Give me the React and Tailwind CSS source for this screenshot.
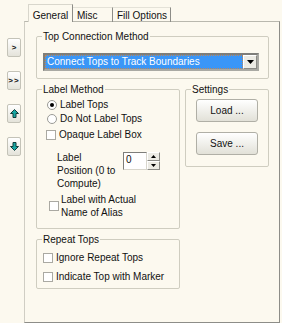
import React from "react";

function GroupBox({ title, className, children }) {
  return (
    <fieldset className={`border border-[#cfcdc0] rounded-[2px] ${className}`}>
      <legend className="ml-[5px] px-[1px] leading-[11px]">{title}</legend>
      {children}
    </fieldset>
  );
}

function SideButton({ children }) {
  return (
    <div className="w-[14px] h-[19px] flex items-center justify-center rounded-[2px] border border-[#c4c3b8] bg-gradient-to-b from-white to-[#e4e3da]">
      {children}
    </div>
  );
}

function Arrow({ down }) {
  return (
    <svg width="9" height="9" viewBox="0 0 9 9" className={down ? "rotate-180" : ""}>
      <polygon
        points="4.5,0.5 8.5,4.5 6,4.5 6,8.5 3,8.5 3,4.5 0.5,4.5"
        fill="#16a7a4"
        stroke="#123c3a"
        strokeWidth="1"
        strokeLinejoin="round"
      />
    </svg>
  );
}

function Radio({ checked, label }) {
  return (
    <div className="h-[14px] flex items-center">
      <div className="w-[10px] h-[10px] rounded-full border border-[#9a9a95] bg-white flex items-center justify-center">
        {checked && <div className="w-[4px] h-[4px] rounded-full bg-black" />}
      </div>
      <span className="ml-[3px]">{label}</span>
    </div>
  );
}

function Check({ label, className = "" }) {
  return (
    <div className={`h-[14px] flex items-center ${className}`}>
      <div className="w-[10px] h-[10px] border border-[#aaa9a2] bg-white shrink-0" />
      <span className="ml-[3px]">{label}</span>
    </div>
  );
}

function PushButton({ children }) {
  return (
    <div className="w-[62px] h-[23px] flex items-center justify-center rounded-[3px] border border-[#b0afa6] bg-gradient-to-b from-white to-[#e2e1d8]">
      {children}
    </div>
  );
}

export default function App() {
  return (
    <div className="w-[282px] h-[323px] flex bg-[#fcf9ef] text-[10px] leading-[12px] text-[#111] font-['Liberation_Sans',Arial,sans-serif] overflow-hidden">
      <div className="w-[24px] shrink-0 flex flex-col pl-[7px] pt-[38px] gap-[14px]">
        <SideButton>
          <span className="text-[8px] font-bold leading-none">&gt;</span>
        </SideButton>
        <SideButton>
          <span className="text-[8px] font-bold leading-none tracking-[1px]">&gt;&gt;</span>
        </SideButton>
        <SideButton>
          <Arrow />
        </SideButton>
        <SideButton>
          <Arrow down />
        </SideButton>
      </div>

      <div className="flex-1 flex flex-col pt-[4px] pr-[2px]">
        <div className="flex items-end pl-[4px] h-[18px] relative z-10">
          <div className="w-[45px] h-[18px] flex items-start justify-center pt-[5px] bg-[#fcf9ef] border-l border-t border-l-[#d8d6cc] border-t-[#d8d6cc] border-r border-r-[#8d8d88]">
            General
          </div>
          <div className="w-[40px] h-[15px] flex items-start pl-[4px] pt-[2px] border-r border-r-[#8d8d88] border-t border-t-[#e4e2d8]">
            Misc
          </div>
          <div className="w-[58px] h-[15px] flex items-start pl-[4px] pt-[2px] border-r border-r-[#8d8d88] border-t border-t-[#e4e2d8]">
            Fill Options
          </div>
        </div>

        <div className="flex-1 -mt-px border border-t-[#b9b8ae] border-l-[#d0cec4] border-r-[#8d8d88] border-b-[#8d8d88] pl-[11px] pt-[9px]">
          <GroupBox title="Top Connection Method" className="w-[233px] h-[48px]">
            <div className="ml-[6px] mt-[11px] w-[216px] h-[18px] flex border-[2px] border-t-[#7e7e7a] border-l-[#7e7e7a] border-r-[#a9a9a3] border-b-[#a9a9a3]">
              <div className="flex-1 bg-[#3a96f7] border border-dotted border-[#b9865a] text-white pl-[1px] leading-[12px]">
                Connect Tops to Track Boundaries
              </div>
              <div className="w-[14px] flex items-center justify-center bg-[#ecebe4] border border-t-white border-l-white border-r-[#8a8a85] border-b-[#8a8a85]">
                <svg width="7" height="4" viewBox="0 0 7 4">
                  <polygon points="0,0 7,0 3.5,4" fill="#000" />
                </svg>
              </div>
            </div>
          </GroupBox>

          <div className="flex mt-[5px]">
            <GroupBox title="Label Method" className="w-[144px] h-[145px]">
              <div className="pl-[10px] mt-[3px]">
                <Radio checked label="Label Tops" />
                <Radio label="Do Not Label Tops" />
              </div>
              <Check label="Opaque Label Box" className="pl-[9px] mt-[2px]" />
              <div className="flex mt-[9px] pl-[20px]">
                <div className="w-[66px] leading-[13px]">
                  Label
                  <br />
                  Position (0 to
                  <br />
                  Compute)
                </div>
                <div className="flex h-[18px] mt-[1px]">
                  <div className="w-[24px] border border-t-[#7e7e7a] border-l-[#7e7e7a] border-r-[#d8d6cc] border-b-[#d8d6cc] bg-white pl-[2px] leading-[14px]">
                    0
                  </div>
                  <div className="w-[13px] flex flex-col">
                    <div className="flex-1 flex items-center justify-center bg-[#ecebe4] border border-t-white border-l-white border-r-[#8a8a85] border-b-[#8a8a85]">
                      <svg width="5" height="3" viewBox="0 0 5 3">
                        <polygon points="2.5,0 5,3 0,3" fill="#000" />
                      </svg>
                    </div>
                    <div className="flex-1 flex items-center justify-center bg-[#ecebe4] border border-t-white border-l-white border-r-[#8a8a85] border-b-[#8a8a85]">
                      <svg width="5" height="3" viewBox="0 0 5 3">
                        <polygon points="0,0 5,0 2.5,3" fill="#000" />
                      </svg>
                    </div>
                  </div>
                </div>
              </div>
              <div className="flex items-center mt-[3px] pl-[12px]">
                <div className="w-[10px] h-[10px] border border-[#aaa9a2] bg-white shrink-0" />
                <div className="ml-[2px] leading-[13px]">
                  Label with Actual
                  <br />
                  Name of Alias
                </div>
              </div>
            </GroupBox>

            <GroupBox title="Settings" className="ml-[5px] w-[84px] h-[83px]">
              <div className="flex flex-col gap-[10px] pl-[10px] mt-[4px]">
                <PushButton>Load ...</PushButton>
                <PushButton>Save ...</PushButton>
              </div>
            </GroupBox>
          </div>

          <GroupBox title="Repeat Tops" className="mt-[5px] w-[144px] h-[55px]">
            <div className="flex flex-col gap-[5px] mt-[6px] pl-[6px]">
              <Check label="Ignore Repeat Tops" />
              <Check label="Indicate Top with Marker" />
            </div>
          </GroupBox>
        </div>
      </div>
    </div>
  );
}
